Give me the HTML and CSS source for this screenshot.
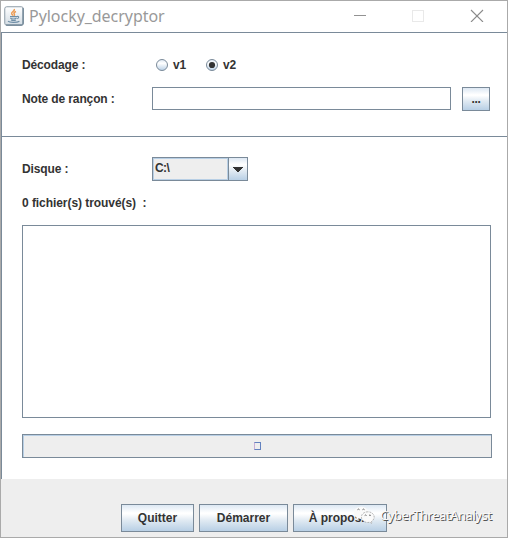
FILE: index.html
```html
<!DOCTYPE html>
<html lang="fr">
<head>
<meta charset="utf-8">
<title>Pylocky_decryptor</title>
<link rel="stylesheet" href="styles.css">
</head>
<body>
<div class="window">
  <header class="titlebar">
    <svg class="app-icon" width="20" height="20" viewBox="0 0 20 20">
      <defs><linearGradient id="tile" x1="0" y1="0" x2="0" y2="1"><stop offset="0" stop-color="#fff"/><stop offset="1" stop-color="#d3dce3"/></linearGradient></defs>
      <rect x=".75" y=".75" width="18.500" height="18.500" rx="2" fill="url(#tile)" stroke="#8d9ba6"/>
      <path d="M2 19h16.500M19 2v16.500" stroke="#526f82" fill="none"/>
      <path d="M10.300 3c.8 2.200-3.200 2.700-2.600 4.700.3.9 1.100 1.100 1.300 2M12 5.500c-2.200 1-2.500 1.800-1.600 2.800.4.600 0 1-.5 1.400" fill="none" stroke="#ed9a51" stroke-width="1.500"/>
      <path d="M6 10.600h7M6.300 12.200c1.500.8 4.500.8 6.300 0M7 14c1.500.6 3.700.6 5 0M13 10.500c2.200-.5 2.300 1.500.2 2.200M4 15.200c1.500 1.600 9.300 1.500 11.400 0" fill="none" stroke="#6f8ea6" stroke-width="1.100"/>
    </svg>
    <h1 class="title">Pylocky_decryptor</h1>
    <svg class="controls" width="132" height="14" viewBox="0 0 132 14" fill="none" shape-rendering="crispEdges">
      <path d="M0 7.500h12" stroke="#929292"/>
      <rect x="58.500" y="2.500" width="11" height="11" stroke="#e9e9e9"/>
      <path d="M117 2l12 12M129 2l-12 12" stroke="#8b8b8b" stroke-width="1.100" shape-rendering="auto"/>
    </svg>
  </header>

  <main class="content">
    <section class="source">
      <div class="row">
        <span class="label">Décodage :</span>
        <label class="option"><svg width="12" height="12" viewBox="0 0 12 12">
          <defs><linearGradient id="metal" x1="0" y1="0" x2="0" y2="1"><stop offset="0" stop-color="#dde8f3"/><stop offset=".35" stop-color="#fff"/><stop offset="1" stop-color="#b8cfe5"/></linearGradient></defs>
          <circle cx="6" cy="6" r="5.500" fill="url(#metal)" stroke="#7a8a99"/></svg>v1</label>
        <label class="option"><svg width="12" height="12" viewBox="0 0 12 12">
          <circle cx="6" cy="6" r="5.500" fill="url(#metal)" stroke="#7a8a99"/><circle cx="6" cy="6" r="3.100" fill="#333"/></svg>v2</label>
      </div>
      <div class="row note">
        <span class="label">Note de rançon :</span>
        <div class="field"></div>
        <button class="button browse">...</button>
      </div>
    </section>
    <section class="target">
      <div class="row">
        <span class="label">Disque :</span>
        <div class="combo"><span class="combo-value">C:\</span><span class="combo-arrow"><svg width="10" height="5" viewBox="0 0 10 5" shape-rendering="crispEdges"><path d="M0 0h10v1H0zM1 1h8v1H1zM2 2h6v1H2zM3 3h4v1H3zM4 4h2v1H4z" fill="#333"/></svg></span></div>
      </div>
      <div class="found">0 fichier(s) trouvé(s)&nbsp; :</div>
      <div class="list"></div>
      <div class="progress"><span class="missing"></span></div>
    </section>
  </main>

  <footer class="actions">
    <button class="button quit">Quitter</button>
    <button class="button start">Démarrer</button>
    <button class="button about">À propos...</button>
  </footer>
  <div class="watermark">
    <svg width="22" height="19" viewBox="0 0 22 19">
      <path d="M8.200.8C3.700.8.6 3.400.6 6.800c0 2 1.100 3.700 2.900 4.800L3 14l2.700-1.400c.8.2 1.600.3 2.500.3 4.400 0 7.400-2.700 7.400-6.100S12.500.8 8.200.8z" fill="#fafafa"/>
      <path d="M14.800 5.800c-3.700 0-6.400 2.300-6.400 5.300s2.700 5.400 6.400 5.400c.7 0 1.400-.1 2-.3l2.200 1.300-.5-2c1.600-1 2.700-2.600 2.700-4.400 0-3-2.700-5.300-6.400-5.300z" fill="#fafafa" stroke="#999" stroke-width=".7" stroke-dasharray="2 1"/>
      <path d="M4.500 3.700q1-1.200 2 0M9.500 3.700q1-1.200 2 0M11.700 9.500q.9-1 1.800 0M16 9.500q.9-1 1.800 0" fill="none" stroke="#555" stroke-width=".9"/>
    </svg>
    <span class="watermark-name">CyberThreatAnalyst</span>
  </div>
</div>
</body>
</html>
```
FILE: styles.css
```css
* { box-sizing: border-box; }
body {
  margin: 0;
  font: bold 12px/14px "Liberation Sans", Arial, sans-serif;
  color: #333;
}
.window {
  position: relative;
  width: 508px;
  height: 538px;
  border: 1px solid #aaa;
  background: #eee;
  display: flex;
  flex-direction: column;
  overflow: hidden;
}
.titlebar {
  height: 31px;
  flex: none;
  display: flex;
  align-items: center;
  padding: 0 21px 2px 3px;
  background: #fff;
}
.title {
  margin: 1px auto 0 5px;
  font: 16px/20px "Noto Sans", sans-serif;
  letter-spacing: -0.04px;
  color: #999;
}
.controls { flex: none; margin-top: -1px; }
.content {
  height: 447px;
  flex: none;
  background: #fff;
  border-top: 1px solid #7a8a99;
  border-left: 1px solid #7a8a99;
}
.source {
  height: 104px;
  padding: 20px 0 0 20px;
  border-bottom: 1px solid #7a8a99;
}
.row { display: flex; height: 24px; align-items: center; }
.label { width: 130px; flex: none; letter-spacing: -0.13px; }
.option { display: flex; align-items: center; gap: 5px; width: 50px; margin-left: 4px; letter-spacing: -0.2px; }
.option + .option { margin-left: 0; }
.note { margin-top: 10px; }
.field { width: 299px; height: 23px; margin: 0 11px 1px 0; border: 1px solid #7a8a99; }
.button {
  border: 1px solid #7a8a99;
  padding: 0;
  background: linear-gradient(#dde8f3, #fff 30%, #fff 34%, #dfe9f2 60%, #b8cfe5);
  font: inherit;
  color: #333;
}
.browse { width: 28px; height: 24px; letter-spacing: -0.3px; }
.target { padding: 20px 0 0 20px; }
.combo {
  display: flex;
  width: 96px;
  height: 24px;
  border: 1px solid #7a8a99;
}
.combo-value {
  flex: 1;
  padding: 3px 2px 0 1px;
  line-height: 13px;
  letter-spacing: -0.6px;
  border: 1px solid #b8cfe5;
  background: #eee;
}
.combo-arrow {
  width: 19px;
  display: flex;
  align-items: center;
  justify-content: center;
  border-left: 1px solid #7a8a99;
  background: linear-gradient(#dde8f3, #fff 30%, #dfe9f2 60%, #b8cfe5);
}
.found { height: 24px; line-height: 24px; margin-top: 10px; letter-spacing: -0.06px; }
.list { width: 469px; height: 193px; margin-top: 10px; border: 1px solid #7a8a99; }
.progress {
  display: flex;
  align-items: center;
  justify-content: center;
  width: 470px;
  height: 24px;
  margin-top: 16px;
  border: 1px solid #7a8a99;
  background: #eee;
  box-shadow: inset 1px 1px #b8cfe5;
}
.missing { width: 7px; height: 8px; border: 1px solid #6382bf; border-left-color: #c9afd8; }
.actions { display: flex; gap: 5px; padding: 25px 0 0 120px; }
.actions .button { height: 28px; }
.quit { width: 73px; }
.start { width: 89px; }
.about { width: 94px; }
.watermark {
  position: absolute;
  left: 352px;
  top: 505px;
  display: flex;
  gap: 5px;
}
.watermark-name {
  font: 13px/18px "Noto Sans", sans-serif;
  letter-spacing: -0.46px;
  color: #fafafa;
  text-shadow: 1px 1px #555;
}
```
